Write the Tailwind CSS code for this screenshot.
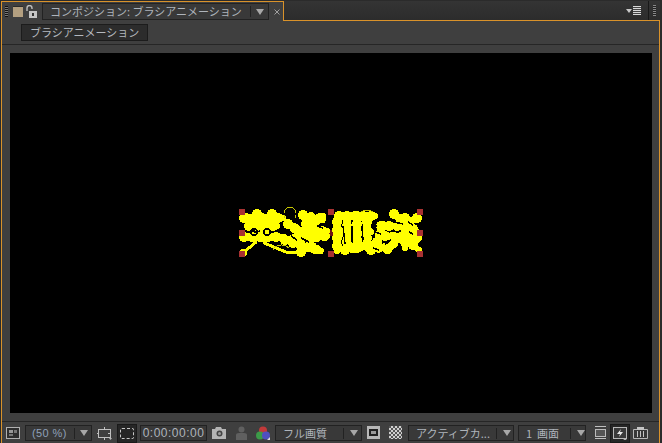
<!DOCTYPE html>
<html lang="ja">
  <head>
    <meta charset="UTF-8" />
    <title>コンポジション</title>
    <script src="https://cdn.jsdelivr.net/npm/@tailwindcss/browser@4"></script>
  </head>
  <body class="bg-[#2b2b2b]">
    <main class="flex h-[443px] w-[662px] flex-col overflow-hidden bg-[#2b2b2b] pt-[1px] font-['Noto_Sans_CJK_JP','Liberation_Sans',sans-serif] text-[11px] leading-none text-[#aeb4bb]">
      <!-- tab row -->
      <div class="flex h-[20px] shrink-0">
        <div class="ml-[1px] flex h-[20px] w-[283px] shrink-0 items-center border-x border-t border-[#d9922a] bg-[#3f3f3f]">
          <div class="ml-[3px] h-[11px] w-[3px] bg-[repeating-linear-gradient(#111_0,#111_1px,#777_1px,#777_2px)]"></div>
          <div class="ml-[5px] h-[11px] w-[10px] border-t border-[#2a2a2a] bg-[#b39f80]"></div>
          <svg class="ml-[3px] h-[14px] w-[12px]" viewBox="0 0 12 14">
            <path d="M1 6V3a2.500 2.500 0 0 1 5 0v1" fill="none" stroke="#bdbdbd" stroke-width="1.400" />
            <rect x="3" y="6" width="8" height="7" fill="#c4c4c4" />
            <rect x="6" y="8" width="2" height="3" fill="#333" />
          </svg>
          <div class="ml-[4px] flex h-[17px] w-[227px] items-center border border-[#222] bg-[#393939] pl-[7px]">
            <span class="w-[200px] whitespace-nowrap">コンポジション: ブラシアニメーション</span>
            <span class="h-[11px] w-px bg-[#222]"></span>
            <span class="ml-[5px] h-0 w-0 border-x-[4px] border-t-[6px] border-x-transparent border-t-[#a8a8a8]"></span>
          </div>
          <svg class="ml-[5px] h-[6px] w-[6px]" viewBox="0 0 6 6">
            <path d="M.5.5l5 5M5.500.5l-5 5" stroke="#a0a0a0" stroke-width="1" />
          </svg>
        </div>
        <div class="flex h-[20px] w-[376px] shrink-0 items-center justify-end border-b border-[#d9922a] bg-gradient-to-b from-[#343434] to-[#2c2c2c] pr-[4px]">
          <span class="mr-[1px] h-0 w-0 border-x-[3px] border-t-[4px] border-x-transparent border-t-[#c8c8c8]"></span>
          <div class="h-[9px] w-[8px] bg-[repeating-linear-gradient(#d8d8d8_0,#d8d8d8_1px,#444_1px,#444_2px)]"></div>
          <span class="ml-[7px] h-[19px] w-px bg-[#181818]"></span>
          <div class="ml-[4px] h-[11px] w-[3px] bg-[repeating-linear-gradient(#888_0,#888_1px,#222_1px,#222_2px)]"></div>
        </div>
      </div>

      <!-- panel -->
      <div class="ml-[1px] flex w-[659px] flex-1 flex-col border-x border-[#d9922a] bg-[#3f3f3f]">
        <div class="flex h-[24px] shrink-0 items-start border-b border-[#262626] pl-[19px] pt-[3px]">
          <div class="flex h-[17px] w-[127px] items-center border border-[#1c1c1c] bg-[#2c2c2c] pl-[8px] whitespace-nowrap text-[#b4b8be]">ブラシアニメーション</div>
        </div>

        <!-- viewer -->
        <div class="ml-[8px] mr-[7px] mt-[8px] flex h-[360px] shrink-0 items-center justify-center bg-black">
          <svg class="h-[60px] w-[200px]" viewBox="230 203 200 60" shape-rendering="crispEdges">
            <rect x="327" y="230" width="6" height="6" fill="#701414" />
            <g fill="none" stroke="#ffff00" stroke-width="6" stroke-linecap="round" stroke-linejoin="round">
              <path id="brush" d="M245 218H282M256 214V228M271 214V228M248 226H276M243 237H283M264 222V240M287 224L300 232L322 216M302 215L322 220M297 231H326M292 243L320 251M305 224L312 250M284 240L326 236M338 216H374M336 222V251M346 218V250M356 216V250M340 232H370M344 250L370 244M366 222V248M376 242L382 224M380 226H394M393 214L416 232M416 218L396 228M384 236L418 238M404 218V248M398 238L386 250M406 240L418 250M370 250L384 246" />
            </g>
            <g fill="none" stroke="#ffff00" stroke-width="10" stroke-linecap="round" stroke-dasharray="0 8">
              <use href="#brush" />
            </g>
            <g fill="none" stroke="#ffff00" stroke-width="3" stroke-linecap="round">
              <path d="M255 242L242 253M263 243L285 252M285 252L300 252" />
            </g>
            <g fill="#ffff00">
              <circle cx="242" cy="253" r="4" />
              <circle cx="300" cy="252" r="5" />
              <circle cx="243" cy="218" r="5" />
            </g>
            <g fill="none" stroke="#000" stroke-width="1.500">
              <path d="M250 232a3 3 0 1 0 6 0a3 3 0 1 0 -6 0M263 232a3 3 0 1 0 6 0a3 3 0 1 0 -6 0M371 222L376 226M394 222L402 224M407 222L412 225M408 232L412 234M384 244L390 240M372 248L378 250M280 228L286 234" />
              <path d="M342 226L344 244M351 226V242M361 228L362 240M300 238L308 242M316 226L322 228M290 236L296 240M374 232L380 234" />
            </g>
            <g fill="none" stroke="#c8c800" stroke-width="1">
              <path d="M284 218a6 7 0 1 1 10 0M272 250a9 7 0 0 1 16 -2M360 212a8 5 0 0 1 12 0" />
            </g>
            <g fill="#a83232">
              <rect x="238" y="209" width="6" height="6" />
              <rect x="327" y="209" width="6" height="6" />
              <rect x="416" y="209" width="6" height="6" />
              <rect x="238" y="230" width="6" height="6" />
              <rect x="416" y="230" width="6" height="6" />
              <rect x="238" y="251" width="6" height="6" />
              <rect x="327" y="251" width="6" height="6" />
              <rect x="416" y="251" width="6" height="6" />
            </g>
          </svg>
        </div>

        <!-- footer -->
        <div class="mt-[8px] flex flex-1 items-start border-t border-[#262626] pl-[4px] pt-[3px]">
          <svg class="mt-[2px] h-[12px] w-[14px]" viewBox="0 0 14 12">
            <rect x=".5" y=".5" width="13" height="11" fill="#2e2e2e" stroke="#b0b0b0" />
            <rect x="3" y="3" width="4" height="3" fill="#999" />
            <rect x="8" y="3" width="3" height="3" fill="#777" />
            <rect x="3" y="7" width="4" height="2" fill="#777" />
          </svg>
          <div class="ml-[5px] flex h-[16px] w-[67px] items-center border border-[#222] bg-[#393939] pl-[6px]">
            <span class="w-[42px] font-['Liberation_Sans',sans-serif] text-[11px] tracking-[0.4px] text-[#8fa0b8]">(50 %)</span>
            <span class="h-[11px] w-px bg-[#222]"></span>
            <span class="ml-[5px] h-0 w-0 border-x-[4px] border-t-[6px] border-x-transparent border-t-[#a8a8a8]"></span>
          </div>
          <svg class="ml-[5px] mt-[2px] h-[13px] w-[16px]" viewBox="0 0 16 13">
            <rect x="1.500" y="2.500" width="12" height="8" fill="none" stroke="#c0c0c0" />
            <path d="M7.500 0v13M0 6.500h15" stroke="#c0c0c0" stroke-dasharray="2 9" />
            <path d="M12 11h3l-1.500 2z" fill="#bbb" />
          </svg>
          <div class="ml-[4px] flex h-[19px] w-[20px] -translate-y-[1px] items-center justify-center border border-[#1a1a1a] bg-[#262626]">
            <div class="h-[11px] w-[14px] rounded-[2px] border border-dashed border-[#c8c8c8]"></div>
          </div>
          <div class="ml-[3px] flex h-[16px] w-[67px] items-center justify-center border border-[#222] bg-[#393939] font-['Liberation_Sans',sans-serif] text-[12px] tracking-[0.5px]">0:00:00:00</div>
          <svg class="ml-[5px] mt-[2px] h-[12px] w-[14px]" viewBox="0 0 14 12">
            <path d="M0 2h3l1-2h5l1 2h4v10H0z" fill="#b4b4b4" />
            <circle cx="7.500" cy="6.500" r="3" fill="#444" />
            <circle cx="7.500" cy="6.500" r="1.500" fill="#999" />
          </svg>
          <svg class="ml-[9px] mt-[1px] h-[14px] w-[13px]" viewBox="0 0 13 14">
            <circle cx="6.500" cy="3.500" r="3" fill="#606060" />
            <path d="M1 14V9q0-2 3-2h5q3 0 3 2v5z" fill="#606060" />
          </svg>
          <svg class="ml-[8px] mt-[1px] h-[14px] w-[14px]" viewBox="0 0 14 14">
            <circle cx="7" cy="4.500" r="4" fill="#c23a3a" />
            <circle cx="4" cy="9.500" r="4" fill="#3c9a48" />
            <circle cx="10" cy="9.500" r="4" fill="#5050c0" />
            <path d="M11 14h3v-3z" fill="#ddd" />
          </svg>
          <div class="ml-[5px] flex h-[16px] w-[87px] items-center border border-[#222] bg-[#393939] pl-[7px]">
            <span class="w-[60px] whitespace-nowrap">フル画質</span>
            <span class="h-[11px] w-px bg-[#222]"></span>
            <span class="ml-[6px] h-0 w-0 border-x-[4px] border-t-[6px] border-x-transparent border-t-[#a8a8a8]"></span>
          </div>
          <div class="ml-[5px] mt-[1px] flex h-[13px] w-[13px] items-center justify-center bg-[#b8b8b8]">
            <div class="h-[7px] w-[9px] border-2 border-[#222] bg-[#9a9a9a]"></div>
          </div>
          <div class="ml-[9px] mt-[1px] h-[13px] w-[13px] bg-[repeating-conic-gradient(#cfcfcf_0_25%,#555_0_50%)] bg-[length:4px_4px]"></div>
          <div class="ml-[6px] flex h-[16px] w-[106px] items-center border border-[#222] bg-[#393939] pl-[7px]">
            <span class="w-[80px] whitespace-nowrap">アクティブカ...</span>
            <span class="h-[11px] w-px bg-[#222]"></span>
            <span class="ml-[6px] h-0 w-0 border-x-[4px] border-t-[6px] border-x-transparent border-t-[#a8a8a8]"></span>
          </div>
          <div class="ml-[4px] flex h-[16px] w-[68px] items-center border border-[#222] bg-[#393939] pl-[7px]">
            <span class="w-[44px] whitespace-nowrap">1&nbsp;&nbsp;画面</span>
            <span class="h-[11px] w-px bg-[#222]"></span>
            <span class="ml-[6px] h-0 w-0 border-x-[4px] border-t-[6px] border-x-transparent border-t-[#a8a8a8]"></span>
          </div>
          <svg class="ml-[8px] mt-[1px] h-[13px] w-[13px]" viewBox="0 0 13 13">
            <path d="M1 .5h11M1 12.500h11" stroke="#c0c0c0" />
            <rect x="1.500" y="3.500" width="10" height="7" fill="#555" stroke="#bbb" />
          </svg>
          <div class="ml-[3px] flex h-[19px] w-[20px] -translate-y-[1px] items-center justify-center border border-[#1a1a1a] bg-[#262626]">
            <svg class="h-[13px] w-[14px]" viewBox="0 0 14 13">
              <rect x=".5" y=".5" width="13" height="11" fill="#3a3a3a" stroke="#b8b8b8" />
              <path d="M8 2L4 7h3L6 10l4-5H7z" fill="#e8e8e8" />
              <path d="M10 12h4l-2 1z" fill="#ddd" />
            </svg>
          </div>
          <svg class="ml-[3px] mt-[1px] h-[13px] w-[15px]" viewBox="0 0 15 13">
            <path d="M.5 12.500v-9h14v9z" fill="#383838" stroke="#b8b8b8" />
            <path d="M4 1h7v3H4z" fill="#c4c4c4" />
            <path d="M4.500 5v6M7.500 5v6M10.500 5v6" stroke="#c4c4c4" />
          </svg>
        </div>
      </div>
    </main>
  </body>
</html>
